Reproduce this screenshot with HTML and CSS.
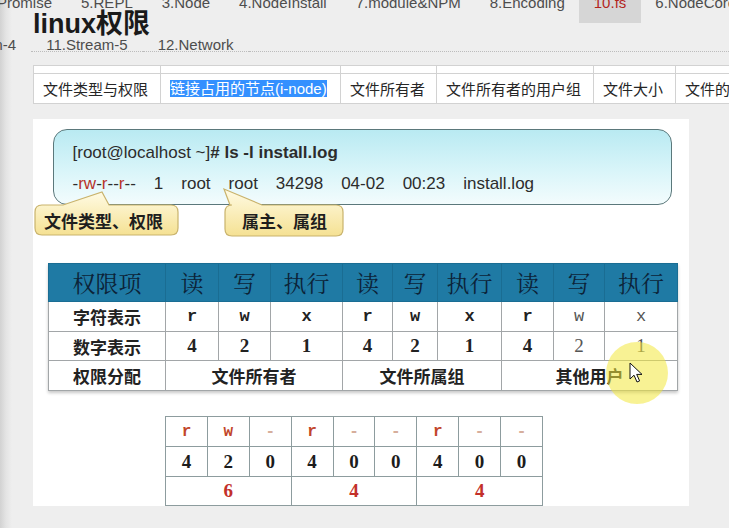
FILE: index.html
```html
<!DOCTYPE html>
<html lang="zh-CN">
<head>
<meta charset="utf-8">
<title>linux权限</title>
<link rel="stylesheet" href="styles.css">
</head>
<body>
<div class="page">
  <nav class="nav">
    <ul class="nav-row row1">
      <li>2.Promise</li>
      <li>5.REPL</li>
      <li>3.Node</li>
      <li>4.NodeInstall</li>
      <li>7.module&amp;NPM</li>
      <li>8.Encoding</li>
      <li class="active">10.fs</li>
      <li>6.NodeCore</li>
    </ul>
    <ul class="nav-row row2">
      <li class="first">9.Stream-4</li>
      <li>11.Stream-5</li>
      <li>12.Network</li>
      <li class="fill"></li>
    </ul>
  </nav>
  <h1 class="title">linux权限</h1>

  <table class="tabs">
    <colgroup><col><col><col><col><col><col></colgroup>
    <tr class="thin"><td></td><td></td><td></td><td></td><td></td><td></td></tr>
    <tr class="main">
      <td>文件类型与权限</td>
      <td><span class="sel">链接占用的节点(i-node)</span></td>
      <td>文件所有者</td>
      <td>文件所有者的用户组</td>
      <td>文件大小</td>
      <td>文件的修改时间</td>
    </tr>
  </table>

  <div class="figure">
    <div class="cmd">
      <div class="cmd-line">[root@localhost ~]<b># ls -l install.log</b></div>
      <div class="cmd-line cols">
        <span>-<i>rw</i>-<i>r</i>--<i>r</i>--</span>
        <span>1</span>
        <span>root</span>
        <span>root</span>
        <span>34298</span>
        <span>04-02</span>
        <span>00:23</span>
        <span>install.log</span>
      </div>
    </div>

    <table class="perm">
      <colgroup><col><col><col><col><col><col><col><col><col><col></colgroup>
      <tr class="head">
        <th>权限项</th><th>读</th><th>写</th><th>执行</th><th>读</th><th>写</th><th>执行</th><th>读</th><th>写</th><th>执行</th>
      </tr>
      <tr class="chars">
        <td class="lab">字符表示</td><td>r</td><td>w</td><td>x</td><td>r</td><td>w</td><td>x</td><td>r</td><td class="lt">w</td><td class="lt">x</td>
      </tr>
      <tr class="nums">
        <td class="lab">数字表示</td><td>4</td><td>2</td><td>1</td><td>4</td><td>2</td><td>1</td><td>4</td><td class="lt">2</td><td class="lt">1</td>
      </tr>
      <tr class="assign">
        <td class="lab">权限分配</td><td colspan="3">文件所有者</td><td colspan="3">文件所属组</td><td colspan="3">其他用户</td>
      </tr>
    </table>

    <table class="bits">
      <colgroup><col><col><col><col><col><col><col><col><col></colgroup>
      <tr class="letters">
        <td class="red">r</td><td class="red">w</td><td class="dash">-</td><td class="red">r</td><td class="dash">-</td><td class="dash">-</td><td class="red">r</td><td class="dash">-</td><td class="dash">-</td>
      </tr>
      <tr class="digits">
        <td>4</td><td>2</td><td>0</td><td>4</td><td>0</td><td>0</td><td>4</td><td>0</td><td>0</td>
      </tr>
      <tr class="sums">
        <td colspan="3">6</td><td colspan="3">4</td><td colspan="3">4</td>
      </tr>
    </table>

    <svg class="callouts" width="656" height="130" viewBox="0 0 656 130" aria-hidden="true">
      <defs>
        <linearGradient id="yel" x1="0" y1="0" x2="0" y2="1">
          <stop offset="0" stop-color="#fffbe4"/>
          <stop offset="1" stop-color="#f5e193"/>
        </linearGradient>
      </defs>
      <path d="M9,86 H30 L69,73 L76,86 H138 Q145,86 145,93 V109 Q145,116 138,116 H9 Q2,116 2,109 V93 Q2,86 9,86 Z" fill="url(#yel)" stroke="#c9b36c" stroke-width="1.2"/>
      <path d="M197,86 L191,70 L229,86 H303 Q310,86 310,93 V110 Q310,117 303,117 H199 Q192,117 192,110 V93 Q192,86 199,86 Z" fill="url(#yel)" stroke="#c9b36c" stroke-width="1.2"/>
    </svg>
    <div class="callout c1">文件类型、权限</div>
    <div class="callout c2">属主、属组</div>

    <div class="glow"></div>
    <svg class="cursor" width="15" height="22" viewBox="0 0 15 22" aria-hidden="true">
      <path d="M1,1 L1,17 L5,13.2 L8,20 L10.6,18.9 L7.7,12.4 L13,12.4 Z" fill="#fff" stroke="#111" stroke-width="1" stroke-linejoin="round"/>
    </svg>
  </div>
</div>
</body>
</html>
```
FILE: styles.css
```css
* { box-sizing: border-box; }
html, body { margin: 0; padding: 0; }
body {
  width: 729px;
  height: 528px;
  overflow: hidden;
  background: linear-gradient(to right, #d2d2d2 0, #e4e4e4 6px, #eeeeee 12px);
  font-family: "Liberation Sans", Arial, "Noto Sans CJK SC", sans-serif;
  color: #333;
}
.page { position: relative; width: 729px; height: 528px; overflow: hidden; }

/* nav */
.nav-row {
  display: flex;
  list-style: none;
  margin: 0;
  padding: 0;
  white-space: nowrap;
  font-size: 15px;
  color: #4d4d4d;
}
.nav-row li { flex-shrink: 0; }
.row1 { margin-top: -6px; margin-left: -30px; }
.row1 li { padding: 0 14.5px 12px; line-height: 17px; }
.row1 li.active { background: #d6d6d6; color: #b3261e; }
.row2 { margin-top: 14.5px; margin-left: -73px; }
.row2 li { padding: 0 15px; line-height: 13px; border-bottom: 1px dotted #bcbcbc; }
.row2 li.first { border-bottom-color: transparent; }
.row2 li.fill { flex: 1; }

.title {
  position: absolute;
  left: 33px;
  top: 8.5px;
  margin: 0;
  font-size: 27px;
  line-height: 31px;
  font-weight: bold;
  color: #1a1a1a;
}

/* tabs table */
.tabs {
  margin: 13.5px 0 0 33px;
  border-collapse: collapse;
  table-layout: fixed;
  width: 762px;
  font-size: 15px;
  color: #262626;
  background: #fff;
}
.tabs col:nth-child(1) { width: 127px; }
.tabs col:nth-child(2) { width: 180px; }
.tabs col:nth-child(3) { width: 96px; }
.tabs col:nth-child(4) { width: 157px; }
.tabs col:nth-child(5) { width: 82px; }
.tabs col:nth-child(6) { width: 120px; }
.tabs td {
  border: 1px solid #d2d2d2;
  padding: 0 0 0 9px;
  white-space: nowrap;
  overflow: hidden;
}
.tabs .thin td { height: 8px; padding: 0; }
.tabs .main td { height: 30px; padding-bottom: 1px; }
.sel { background: #3390ff; color: #fff; line-height: 17px; display: inline-block; }

/* figure */
.figure {
  position: relative;
  margin: 15px 0 0 33px;
  width: 656px;
  height: 387px;
  padding-top: 9.5px;
  background: #fff;
  overflow: hidden;
}
.cmd {
  margin-left: 20px;
  width: 619px;
  height: 76px;
  border: 1.5px solid #5b787b;
  border-radius: 14px;
  padding: 7.5px 0 0 18.5px;
  background: linear-gradient(to bottom, #b9eaf2 0%, #d9f5f9 55%, #f3fcfd 100%);
  font-size: 17px;
  color: #2c2c2c;
}
.cmd-line { line-height: 31px; white-space: nowrap; }
.cmd-line b { font-weight: bold; }
.cols { display: flex; gap: 18px; }
.cols i { font-style: normal; color: #b8332a; }

.callouts { position: absolute; left: 0; top: 0; pointer-events: none; }
.callout {
  position: absolute;
  top: 92px;
  font-size: 17px;
  line-height: 20px;
  font-weight: bold;
  color: #1e1e1e;
  font-family: "Noto Sans CJK SC", sans-serif;
  white-space: nowrap;
}
.c1 { left: 11px; }
.c2 { left: 209px; }

/* permission table */
.perm {
  margin: 58.5px 0 0 15px;
  width: 629px;
  border-collapse: collapse;
  table-layout: fixed;
  border: 1px solid #62899a;
  box-shadow: 0 2px 3px rgba(0, 0, 0, 0.22);
  font-family: "Liberation Serif", "Noto Serif CJK SC", "Noto Sans CJK SC", serif;
}
.perm col:nth-child(1) { width: 117px; }
.perm col:nth-child(2) { width: 53px; }
.perm col:nth-child(3) { width: 52px; }
.perm col:nth-child(4) { width: 72px; }
.perm col:nth-child(5) { width: 50px; }
.perm col:nth-child(6) { width: 45px; }
.perm col:nth-child(7) { width: 64px; }
.perm col:nth-child(8) { width: 52px; }
.perm col:nth-child(9) { width: 51px; }
.perm col:nth-child(10) { width: 73px; }
.perm th {
  background: #1f7aa4;
  color: #0c2338;
  height: 38px;
  padding: 0;
  font-size: 23px;
  font-weight: normal;
  border: 1px solid #1a6d93;
}
.perm td {
  border: 1px solid #a2a6a8;
  text-align: center;
  padding: 0;
  color: #222;
  background: #fff;
}
.perm .chars td { height: 30px; font-family: "Liberation Mono", monospace; font-weight: bold; font-size: 17px; }
.perm .nums td { height: 29px; font-weight: bold; font-size: 19px; }
.perm .assign td { height: 30px; font-size: 17px; font-weight: bold; font-family: "Noto Sans CJK SC", sans-serif; }
.perm td.lab { font-family: "Noto Sans CJK SC", sans-serif; font-size: 17px; font-weight: bold; color: #222; }
.perm td.lt { font-weight: normal; color: #555; }

/* bits table */
.bits {
  margin: 25px 0 0 132px;
  width: 378px;
  border-collapse: collapse;
  table-layout: fixed;
  border: 1px solid #7ea3a6;
  font-family: "Liberation Serif", serif;
}
.bits td {
  border: 1px solid #8d9c9e;
  text-align: center;
  padding: 0;
  background: #fff;
}
.bits .letters td { height: 30px; font-family: "Liberation Mono", monospace; font-size: 16px; font-weight: bold; }
.bits .red { color: #c2452a; }
.bits .dash { color: #d6ae9c; font-weight: normal; }
.bits .digits td { height: 30px; font-weight: bold; font-size: 19px; color: #1c1c1c; }
.bits .sums td { height: 29px; font-weight: bold; font-size: 19px; color: #c3302a; }

/* cursor highlight */
.glow {
  position: absolute;
  left: 573px;
  top: 223px;
  width: 62px;
  height: 62px;
  border-radius: 50%;
  background: rgba(242, 232, 60, 0.55);
}
.cursor { position: absolute; left: 596px; top: 243px; }
```
